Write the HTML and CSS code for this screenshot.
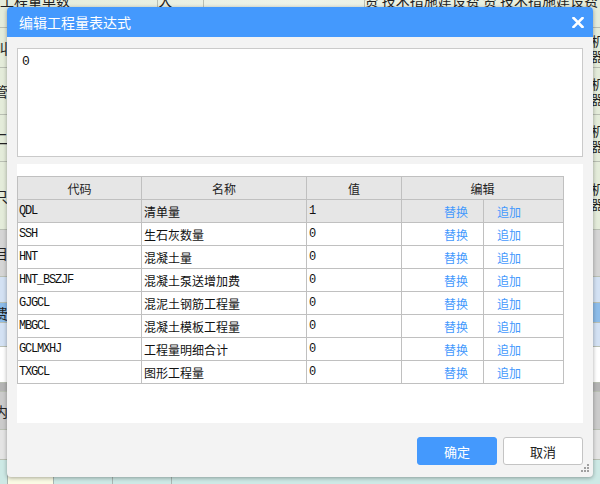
FILE: index.html
```html
<!DOCTYPE html>
<html lang="zh-CN">
<head>
<meta charset="utf-8">
<title>编辑工程量表达式</title>
<link rel="stylesheet" href="styles.css">
</head>
<body>
<div class="sheet">
  <div class="srow r0">
    <div class="sc w174"><span class="stxt">工程量单数</span></div>
    <div class="sc w50"><span class="stxt">大</span></div>
    <div class="sc w177"></div>
    <div class="sc wrest"><span class="stxt">资 技术措施建设费 资 技术措施建设费</span></div>
  </div>
  <div class="srow r1"><span class="lt">叫</span><span class="rt">机器</span></div>
  <div class="srow r2"><span class="lt">管</span><span class="rt">机器</span></div>
  <div class="srow r3"><span class="lt">二</span><span class="rt">机器</span></div>
  <div class="srow r4"><span class="lt">只</span><span class="rt">机器</span></div>
  <div class="srow r5"><span class="lt">目</span></div>
  <div class="srow r6"></div>
  <div class="srow r7"><span class="lt">费</span></div>
  <div class="srow r8"></div>
  <div class="srow r9"></div>
  <div class="srow r10"></div>
  <div class="srow r11"><span class="lt">内</span></div>
  <div class="srow r12"></div>
  <div class="srow r13">
    <div class="bc w8"></div>
    <div class="bc w46 yellow"></div>
    <div class="bc w59"></div>
    <div class="bc w59"></div>
  </div>
</div>

<div class="dialog">
  <div class="titlebar">
    <span class="title">编辑工程量表达式</span>
    <svg class="close" width="12" height="11" viewBox="0 0 12 11"><path d="M1.5 1 L10.5 10 M10.5 1 L1.5 10" stroke="#fff" stroke-width="2.6" stroke-linecap="square"/></svg>
  </div>
  <div class="content">
    <div class="expr">0</div>
    <div class="panel">
      <table class="grid">
        <colgroup>
          <col class="c-code"><col class="c-name"><col class="c-val"><col class="c-rep"><col class="c-add">
        </colgroup>
        <thead>
          <tr><th>代码</th><th>名称</th><th>值</th><th colspan="2">编辑</th></tr>
        </thead>
        <tbody>
          <tr class="sel"><td class="code">QDL</td><td class="name">清单量</td><td class="val">1</td><td class="rep">替换</td><td class="add">追加</td></tr>
          <tr><td class="code">SSH</td><td class="name">生石灰数量</td><td class="val">0</td><td class="rep">替换</td><td class="add">追加</td></tr>
          <tr><td class="code">HNT</td><td class="name">混凝土量</td><td class="val">0</td><td class="rep">替换</td><td class="add">追加</td></tr>
          <tr><td class="code">HNT_BSZJF</td><td class="name">混凝土泵送增加费</td><td class="val">0</td><td class="rep">替换</td><td class="add">追加</td></tr>
          <tr><td class="code">GJGCL</td><td class="name">混泥土钢筋工程量</td><td class="val">0</td><td class="rep">替换</td><td class="add">追加</td></tr>
          <tr><td class="code">MBGCL</td><td class="name">混凝土模板工程量</td><td class="val">0</td><td class="rep">替换</td><td class="add">追加</td></tr>
          <tr><td class="code">GCLMXHJ</td><td class="name">工程量明细合计</td><td class="val">0</td><td class="rep">替换</td><td class="add">追加</td></tr>
          <tr><td class="code">TXGCL</td><td class="name">图形工程量</td><td class="val">0</td><td class="rep">替换</td><td class="add">追加</td></tr>
        </tbody>
      </table>
    </div>
    <div class="footer">
      <button class="btn primary">确定</button>
      <button class="btn">取消</button>
    </div>
  </div>
  <svg class="grip" width="8" height="8" viewBox="0 0 8 8">
    <rect x="6" y="0" width="2" height="2" fill="#a0a0a0"/>
    <rect x="3" y="3" width="2" height="2" fill="#a0a0a0"/>
    <rect x="6" y="3" width="2" height="2" fill="#a0a0a0"/>
    <rect x="0" y="6" width="2" height="2" fill="#a0a0a0"/>
    <rect x="3" y="6" width="2" height="2" fill="#a0a0a0"/>
    <rect x="6" y="6" width="2" height="2" fill="#a0a0a0"/>
  </svg>
</div>
</body>
</html>
```

FILE: styles.css
```css
html, body {
  margin: 0;
  padding: 0;
}
body {
  width: 600px;
  height: 484px;
  overflow: hidden;
  position: relative;
  font-family: "Noto Sans CJK SC", "Liberation Sans", sans-serif;
  background: #e8eee0;
}

/* background spreadsheet */
.sheet {
  display: flex;
  flex-direction: column;
  margin-top: -12px;
}
.srow {
  display: flex;
  justify-content: space-between;
  align-items: center;
  border-bottom: 1px solid #b9bfb3;
  background: linear-gradient(to right, #e4ecda, #eef3e9 50%, #e4ecda);
  font-size: 14px;
  color: #222;
  overflow: hidden;
}
.srow .lt { margin-left: -6px; }
.srow .rt {
  margin-right: -5px;
  width: 14px;
  line-height: 15px;
  font-size: 13px;
  word-break: break-all;
}
.r0 { height: 39px; align-items: stretch; justify-content: flex-start; }
.sc { border-right: 1px solid #b9bfb3; display: flex; align-items: flex-end; }
.stxt { font-size: 14px; line-height: 14px; padding: 0 2px 0 0; white-space: nowrap; margin-bottom: 20px; }
.w174 { width: 173px; }
.w50 { width: 49px; }
.w177 { width: 176px; }
.wrest { flex: 1; border-right: none; }
.r1 { height: 39px; }
.r2 { height: 46px; }
.r3 { height: 46px; }
.r4 { height: 67px; }
.r5 { height: 46px; background: #d5d5d5; }
.r6 { height: 25px; background: #d3e1f3; }
.r7 { height: 19px; background: #8dbce9; }
.r8 { height: 23px; background: #d3e1f3; }
.r9 { height: 35px; background: #ffffff; }
.r10 { height: 8px; background: #b4b4b4; }
.r11 { height: 37px; background: #cbcbcb; }
.r12 { height: 29px; background: #e4e4e4; }
.r13 { height: 30px; background: #cde9e5; align-items: stretch; justify-content: flex-start; }
.bc { border-right: 1px solid #a9b6b2; }
.w8 { width: 7px; }
.w46 { width: 45px; }
.w59 { width: 58px; }
.yellow { background: #fafbe4; }

/* dialog */
.dialog {
  position: absolute;
  left: 7px;
  top: 7px;
  width: 586px;
  height: 470px;
  background: #f3f3f3;
  border-radius: 4px;
  box-shadow: 0 1px 4px rgba(0, 0, 0, 0.35);
  display: flex;
  flex-direction: column;
}
.titlebar {
  height: 30px;
  flex: none;
  background: #4499fd;
  border-radius: 4px 4px 0 0;
  display: flex;
  align-items: center;
  justify-content: space-between;
  padding: 0 9px 0 12px;
}
.title {
  color: #fff;
  font-size: 14px;
  line-height: 16px;
}
.close { display: block; }

.content {
  padding: 11px 10px 0;
  display: flex;
  flex-direction: column;
}
.expr {
  height: 109px;
  box-sizing: border-box;
  background: #fff;
  border: 1px solid #cacaca;
  padding: 5px 4px;
  font-family: "Liberation Mono", monospace;
  font-size: 13px;
  line-height: 16px;
  color: #111;
}
.panel {
  margin-top: 7px;
  height: 259px;
  box-sizing: border-box;
  background: #fff;
  padding-top: 12px;
}

.grid {
  border-collapse: collapse;
  table-layout: fixed;
  width: 546px;
  font-size: 12px;
}
.c-code { width: 124px; }
.c-name { width: 165px; }
.c-val { width: 95px; }
.c-rep { width: 82px; }
.c-add { width: 80px; }
.grid th, .grid td {
  border: 1px solid #c0c0c0;
  height: 23px;
  padding: 0;
  box-sizing: border-box;
  white-space: nowrap;
  overflow: hidden;
}
.grid th {
  background: #e6e6e6;
  font-weight: normal;
  color: #222;
  text-align: center;
}
.grid tr.sel td { background: #e6e6e6; }
.grid td { color: #111; }
.grid td.code, .grid td.val {
  font-family: "Liberation Mono", monospace;
  font-size: 12px;
  letter-spacing: -1.2px;
}
.grid td.code { padding-left: 1px; }
.grid td.name { padding-left: 2px; }
.grid td.val { padding-left: 2px; }
.grid td.rep, .grid td.add { color: #4499fd; }
.grid td.rep { padding-left: 42px; }
.grid td.add { padding-left: 13px; }

.footer {
  margin-top: 14px;
  display: flex;
  justify-content: flex-end;
  gap: 6px;
}
.btn {
  width: 80px;
  height: 28px;
  box-sizing: border-box;
  border-radius: 3px;
  border: 1px solid #c4c4c4;
  background: #fff;
  color: #222;
  font-family: "Noto Sans CJK SC", sans-serif;
  font-size: 13px;
  padding: 0;
}
.btn.primary {
  background: #4499fd;
  border-color: #4499fd;
  color: #fff;
}
.grip {
  position: absolute;
  right: 4px;
  bottom: 5px;
}
```
